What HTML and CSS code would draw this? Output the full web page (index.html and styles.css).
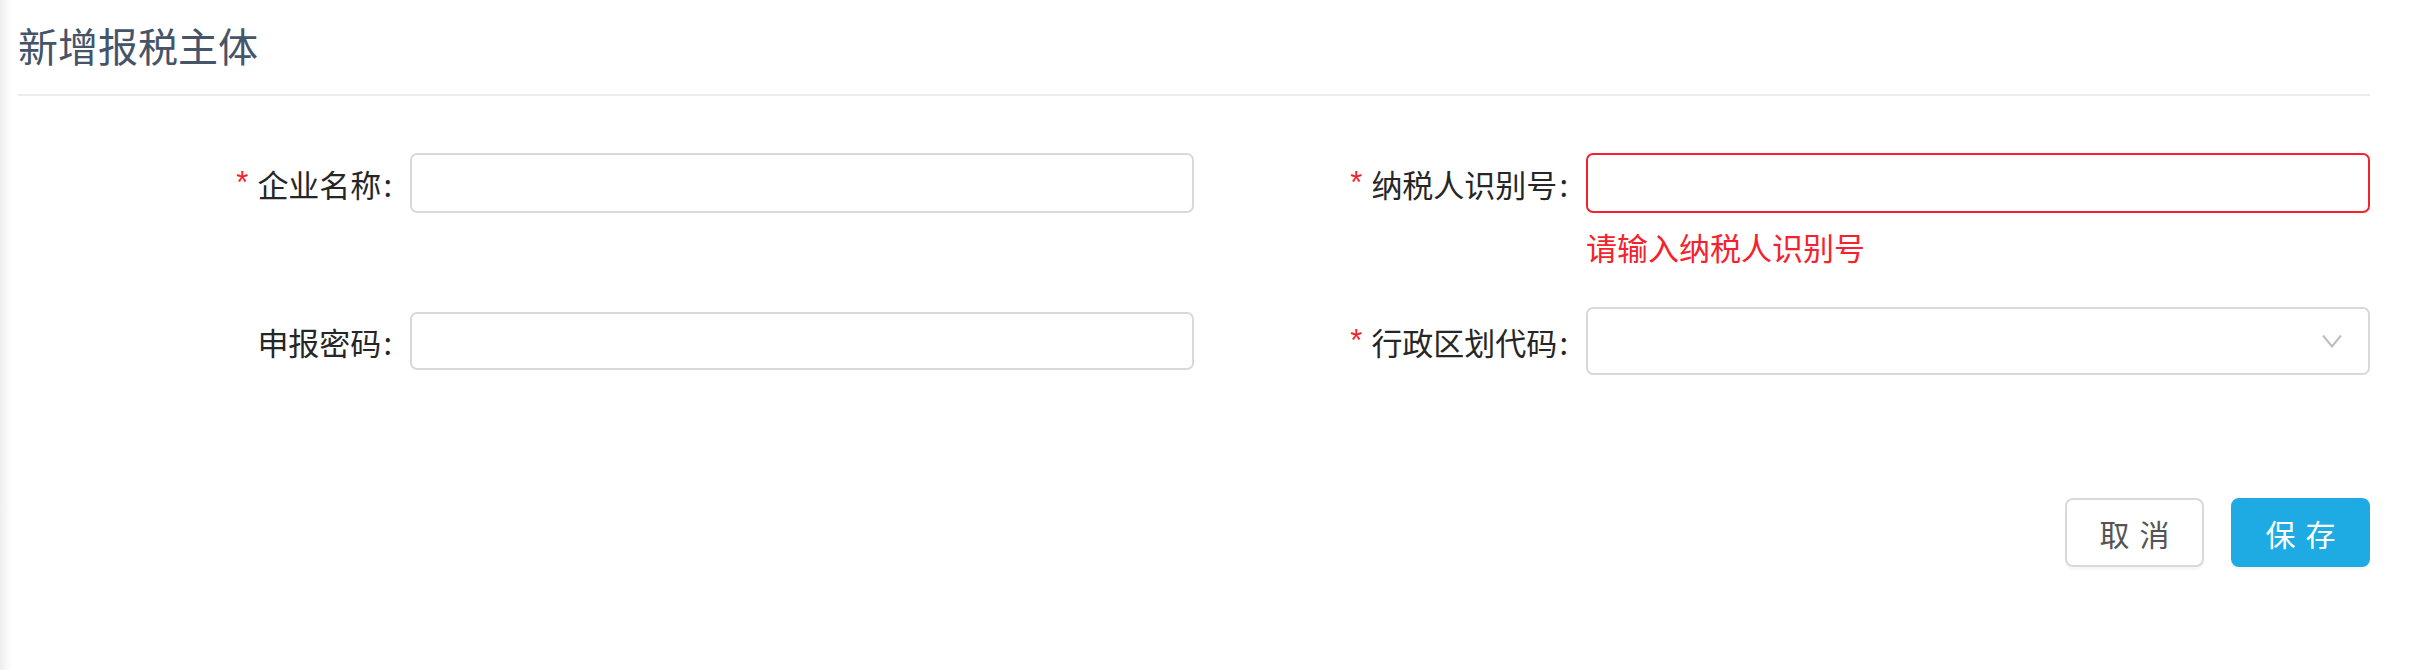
FILE: index.html
```html
<!DOCTYPE html>
<html lang="zh-CN">
  <head>
    <meta charset="UTF-8" />
    <meta name="viewport" content="width=device-width, initial-scale=1.0" />
    <title>新增报税主体</title>
    <link rel="stylesheet" href="styles.css">
  </head>
  <body>
    <div class="page">
      <div class="page-header">
        <h1 class="page-title">新增报税主体</h1>
      </div>
      <form class="entity-form">
        <div class="form-grid">
          <div class="form-item">
            <label class="form-label required">企业名称</label>
            <div class="form-control">
              <input class="input" type="text" />
            </div>
          </div>
          <div class="form-item">
            <label class="form-label required">纳税人识别号</label>
            <div class="form-control">
              <input class="input has-error" type="text" />
              <div class="form-error">请输入纳税人识别号</div>
            </div>
          </div>
          <div class="form-item centered">
            <label class="form-label">申报密码</label>
            <div class="form-control">
              <input class="input input-sm" type="password" />
            </div>
          </div>
          <div class="form-item centered">
            <label class="form-label required">行政区划代码</label>
            <div class="form-control">
              <div class="select">
                <svg class="select-arrow" width="20" height="14" viewBox="0 0 20 14">
                  <polyline points="1,1.5 10,12.5 19,1.5" fill="none" stroke="#bdbdbd" stroke-width="2" />
                </svg>
              </div>
            </div>
          </div>
        </div>
        <div class="form-actions">
          <button type="button" class="btn btn-default">取消</button>
          <button type="button" class="btn btn-primary">保存</button>
        </div>
      </form>
    </div>
  </body>
</html>
```
FILE: styles.css
```css
html {
  height: 100%;
}
body {
  margin: 0;
  height: 100%;
  background: linear-gradient(to right, #eeeeee, #ffffff 12px);
  font-family: "Noto Sans CJK SC", "Noto Sans", sans-serif;
}
.page {
  padding: 0 44px 0 18px;
}
.page-header {
  padding: 16px 0 20px;
  border-bottom: 2px solid #ececec;
}
.page-title {
  margin: 0;
  font-size: 40px;
  line-height: 58px;
  font-weight: 400;
  color: #455468;
}
.form-grid {
  display: grid;
  grid-template-columns: 1fr 1fr;
  row-gap: 40px;
  padding-top: 57px;
  align-items: start;
}
.form-item {
  display: flex;
  align-items: flex-start;
}
.form-item.centered {
  align-self: center;
  align-items: center;
}
.form-label {
  flex: 0 0 392px;
  box-sizing: border-box;
  height: 60px;
  padding-right: 18px;
  display: flex;
  align-items: center;
  justify-content: flex-end;
  font-size: 31px;
  color: #262626;
}
.form-label.required:before {
  content: "*";
  color: #f5222d;
  margin-right: 9px;
  font-family: "Liberation Sans", sans-serif;
  font-size: 31px;
}
.form-label:after {
  content: ":";
  margin-left: 2px;
}
.form-control {
  flex: 1;
}
.input {
  display: block;
  width: 100%;
  height: 60px;
  box-sizing: border-box;
  margin: 0;
  border: 2px solid #d9d9d9;
  border-radius: 7px;
  background: #fff;
  outline: none;
}
.input-sm {
  height: 58px;
}
.input.has-error {
  border-color: #f5222d;
}
.form-error {
  margin-top: 14px;
  line-height: 40px;
  font-size: 31px;
  color: #f5222d;
}
.select {
  height: 68px;
  box-sizing: border-box;
  border: 2px solid #d9d9d9;
  border-radius: 7px;
  background: #fff;
  display: flex;
  align-items: center;
  justify-content: flex-end;
  padding-right: 26px;
}
.select-arrow {
  display: block;
}
.form-actions {
  display: flex;
  justify-content: flex-end;
  gap: 27px;
  margin-top: 123px;
}
.btn {
  width: 139px;
  height: 69px;
  padding: 0 0 0 10px;
  border-radius: 8px;
  font-family: inherit;
  font-size: 30px;
  letter-spacing: 10px;
  cursor: pointer;
  box-shadow: 0 3px 0 rgba(0, 0, 0, 0.03);
}
.btn-default {
  background: #fff;
  border: 2px solid #d9d9d9;
  color: #555;
}
.btn-primary {
  background: #1eabe3;
  border: 2px solid #1eabe3;
  color: #fff;
}
```
